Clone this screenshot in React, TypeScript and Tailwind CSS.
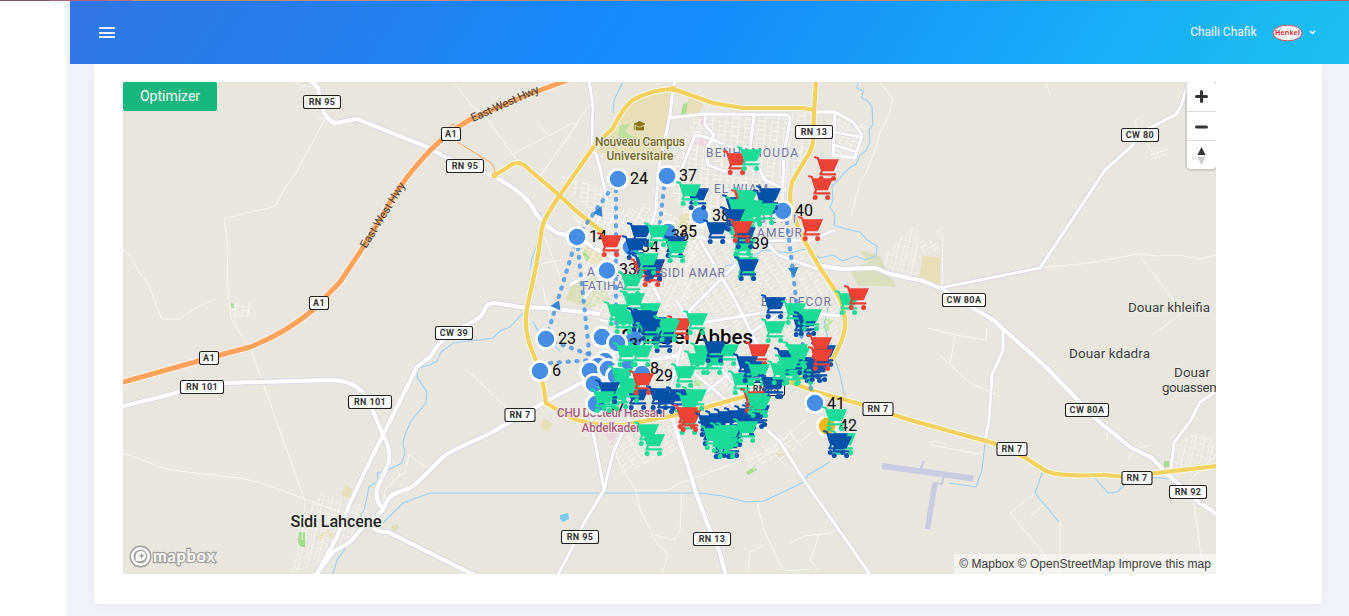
import React from "react";

type Tone = "r" | "g" | "b";

const toneColor: Record<Tone, string> = { r: "#ee4237", g: "#1bdb98", b: "#0351a8" };

const carts: [number, number, Tone][] = [
  [723, 150, "r"], [737, 146, "g"], [684, 185, "b"], [676, 181, "g"],
  [814, 156, "r"], [808, 175, "r"], [798, 216, "r"],
  [722, 194, "b"], [731, 189, "r"], [733, 187, "g"], [753, 189, "b"], [756, 185, "b"],
  [722, 207, "b"], [725, 210, "g"], [725, 196, "g"], [733, 204, "g"], [738, 197, "g"], [740, 202, "g"], [752, 200, "g"],
  [720, 206, "b"], [703, 219, "b"], [729, 231, "g"], [731, 236, "g"], [731, 224, "b"], [728, 218, "r"], [733, 254, "g"], [734, 256, "b"],
  [597, 232, "r"], [661, 233, "b"], [627, 222, "b"], [644, 222, "g"], [622, 235, "b"], [663, 238, "g"],
  [630, 258, "r"], [640, 257, "r"], [638, 262, "r"], [632, 254, "b"], [640, 256, "b"], [634, 250, "g"],
  [618, 271, "g"], [620, 290, "g"], [604, 301, "g"], [636, 300, "g"], [610, 309, "g"], [622, 309, "g"],
  [633, 308, "b"], [627, 307, "b"], [642, 314, "b"], [667, 315, "r"], [683, 310, "g"], [653, 315, "g"], [648, 320, "b"], [650, 328, "b"],
  [637, 324, "g"], [655, 317, "g"], [636, 316, "b"], [613, 342, "g"], [628, 342, "g"],
  [608, 365, "g"], [614, 375, "g"], [606, 384, "g"], [597, 386, "g"], [595, 379, "b"], [590, 388, "g"],
  [624, 385, "b"], [617, 378, "g"], [629, 370, "r"], [666, 386, "b"], [646, 385, "b"], [652, 389, "b"], [671, 363, "g"],
  [684, 350, "g"], [690, 342, "g"], [714, 341, "g"], [700, 350, "g"], [701, 338, "b"], [682, 386, "g"], [676, 392, "g"],
  [634, 421, "g"], [640, 431, "g"],
  [761, 294, "b"], [789, 312, "b"], [781, 300, "g"], [794, 311, "b"], [797, 306, "g"], [761, 318, "g"],
  [745, 341, "r"], [733, 353, "b"], [728, 370, "g"], [743, 361, "g"], [738, 358, "b"], [745, 361, "g"], [761, 374, "b"], [758, 374, "b"],
  [774, 347, "b"], [800, 358, "b"], [791, 360, "g"], [798, 354, "b"], [767, 360, "g"], [777, 361, "g"], [783, 341, "g"], [780, 350, "b"], [775, 354, "g"], [785, 344, "g"],
  [811, 342, "b"], [805, 357, "b"], [807, 334, "r"], [808, 346, "r"],
  [835, 290, "g"], [844, 285, "r"], [822, 406, "g"], [831, 430, "g"], [823, 430, "b"], [827, 433, "b"],
  [675, 410, "g"], [676, 407, "r"], [673, 404, "r"],
  [745, 402, "b"], [742, 404, "b"], [734, 405, "b"], [724, 407, "b"], [714, 408, "b"], [705, 410, "b"], [695, 412, "b"], [732, 412, "b"],
  [740, 388, "r"], [746, 393, "g"], [743, 390, "g"],
  [698, 421, "b"], [720, 422, "b"], [712, 434, "b"], [709, 434, "b"], [717, 433, "b"], [700, 425, "g"], [716, 422, "g"], [710, 422, "g"], [707, 428, "g"], [713, 434, "g"], [733, 418, "g"],
];

const stops: [number, number][] = [
  [618, 179], [667, 176], [700, 215.5], [783, 211], [668, 232], [631, 247], [577, 237], [607, 270.5],
  [546, 339], [540, 371], [634, 339], [602, 337], [617, 343], [605, 361], [598, 366], [590, 371], [628, 368], [608, 369],
  [594, 384], [616, 376], [642, 374], [596, 404], [815, 403],
];

const stopLabels: [number, number, string][] = [
  [630, 184, "24"], [679, 181, "37"], [712, 220.5, "38"], [795, 216, "40"], [679, 237, "35"], [671, 241, "36"],
  [641, 252, "34"], [619, 275, "33"], [589, 242, "14"], [558, 344, "23"], [552, 376, "6"], [655, 380.5, "29"],
  [751, 249, "39"], [827, 408.5, "41"], [839, 431, "42"], [650, 374, "8"], [608, 410, "17"], [629, 350, "32"],
];

const shields: [number, number, number, string][] = [
  [322, 102, 38, "RN 95"], [451, 134, 20, "A1"], [465, 166, 38, "RN 95"], [319, 303, 20, "A1"], [209, 358, 20, "A1"],
  [202, 387, 44, "RN 101"], [370, 402, 44, "RN 101"], [454, 333, 38, "CW 39"], [520, 415, 31, "RN 7"],
  [814, 132, 38, "RN 13"], [1140, 135, 38, "CW 80"], [964, 300, 44, "CW 80A"], [878, 409, 31, "RN 7"],
  [1012, 449, 31, "RN 7"], [1137, 478, 31, "RN 7"], [1188, 492, 38, "RN 92"], [1087, 410, 44, "CW 80A"],
  [580, 537, 38, "RN 95"], [712, 539, 38, "RN 13"], [766, 389, 38, "RN 13"],
];

const fineRoads = [
  "M325 118 L319 118 L325 119 L295 175 L286 186 L276 205 L270 208 L250 212 L224 219 L228 248 L227 274 L229 302 L231 318 L241 335 L250 347 L305 501 L302 540",
  "M295 82 L299 85 L316 87", "M120 245 L133 260 L141 275 L148 283 L158 310 L162 319 L180 319 L192 310 L215 299",
  "M120 452 L170 470 L240 478 L262 483 L340 512", "M453 82 L475 109 L480 110 L517 160", "M513 154 L573 123 L577 125 L541 175",
  "M590 104 L541 175", "M536 122 L548 135", "M543 234 L561 278", "M541 264 L561 260", "M543 287 L551 323",
  "M467 370 L506 407", "M390 455 L400 475 L385 490 L383 505", "M400 475 L405 473 L409 455 L427 468",
  "M880 82 L893 99 L888 117 L880 133 L873 156 L865 175 L860 182 L851 216",
  "M1040 268 L1090 263 L1138 254 L1157 256 L1178 255 L1200 259 L1216 255", "M1138 254 L1174 301", "M1184 311 L1153 335",
  "M1139 117 L1134 123 L1158 161", "M1150 155 L1168 149 M1151 159 L1167 154 M1156 151 L1160 158",
  "M928 328 L955 335 L986 340 L987 328 M955 335 L950 365", "M940 355 L970 383 L1001 397",
  "M942 228 L937 232 L943 238 L942 286", "M615 452 L622 470 L636 490 L640 510 L650 530 L654 540 L668 555 L662 574",
  "M635 490 L668 490 L680 483 L735 463 L780 449", "M682 493 L680 530 L674 540 L654 535", "M757 503 L764 530 L780 564 L786 571 L810 569",
  "M763 546 L750 552 L748 574", "M790 543 L805 536 L830 533 L837 530 M820 533 L810 560 L820 572",
  "M1216 455 L1190 480 L1198 530 L1202 568", "M1035 493 L1010 513 L1060 573", "M1060 522 L1060 573", "M1031 516 L1046 502",
  "M985 450 L979 454 L930 445 L933 441 L947 444", "M1046 82 L1050 95", "M760 460 L805 420 M775 464 L812 432 M771 450 L785 465 M790 433 L803 447",
  "M1107 440 L1107 420 M1128 460 L1134 449 L1151 445",
];

const whiteRoads = [
  "M310 80 L318 88 L321 103 Q325 121 336 123 L357 119 L427 147 L447 158 L493 176 Q522 191 531 205 Q540 223 557 233 L577 237 L603 253 L660 280",
  "M120 407 L180 392 L223 383 L330 380 Q356 380 368 399 L383 435 Q391 449 389 462 L378 486 Q373 501 385 510",
  "M600 314 L547 308 L520 307 L495 303 Q487 302 484 311 Q482 318 470 323 L440 342 L430 357 L417 367 L383 435 L367 467 L350 503 L337 537 L317 574",
  "M680 355 L640 362 L610 367 L583 382 L543 403 L517 418 L487 435 Q448 452 443 457 L423 477 Q414 487 405 490 Q389 494 386 503 L383 510 L363 527 L350 542 L333 552 L315 576",
  "M373 528 Q382 533 388 532 L420 548 L474 575",
  "M638 400 L628 420 L613 453 L604 490 L584 523 L566 560 L557 576", "M590 400 L592 427 L597 453 L604 490",
  "M664 390 L676 430 L687 463 L696 493 L707 523 L720 553 L726 576",
  "M735 395 L756 420 L780 442 L804 480 L839 530 L871 576",
  "M589 80 L593 108 L592 142 L600 168 L607 200", "M675 80 L673 89 L670 115 L658 172 L656 210 L640 260 L660 300",
  "M668 118 L705 114 L787 115 Q790 116 790 120 L784 155 L782 210",
  "M818 265 L840 269 L875 268 L890 274 L923 281 L940 288 L993 320 L1045 366 L1097 420 L1130 447 L1152 458 L1165 472 L1200 503 L1217 514",
  "M940 288 L1040 268 L1105 170 L1133 145 L1136 135 L1175 115 Q1183 107 1188 80",
  "M1171 469 L1174 443 L1191 420 L1200 402 L1217 391", "M1003 328 L1003 350 L992 375 L989 420 L985 441",
  "M815 112 L835 112 L853 122 L862 135 L855 158 L833 155 L835 112 M835 132 L860 137 M834 145 L857 152",
  "M695 135 L706 137 L738 150 M695 135 L677 181 M705 114 L705 125 L714 135 L706 150 L708 165 L735 175",
  "M754 115 L750 150 L765 180 L786 190", "M645 235 L680 235 L735 242 L760 241 L810 240 L835 230", "M820 270 L778 255 L753 228",
  "M600 320 L650 330 L700 323 L780 310 L840 316", "M676 300 L715 360 L760 420", "M700 240 L735 300 L760 350", "M770 200 L740 260 L690 310 L670 390",
  "M583 300 L605 272 M570 285 L610 260", "M711 365 L740 340 L800 300", "M695 400 L760 350 M690 370 L745 415",
];

const yellowRoads = [
  "M493 176 L507 168 Q515 160 524 165 L559 195 L575 210 L605 234",
  "M816 80 L814 112 L813 142 Q811 152 805 160 L792 182 Q788 199 793 215 L803 238 L820 268 L837 293 Q846 310 845 327 Q843 342 832 360 Q815 375 790 382",
  "M815 110 L803 108 L743 108 L713 103 L673 89 Q650 90 633 100 Q623 107 613 128 L593 148 L560 195 Q544 218 542 228 L537 262 L527 308 Q523 330 533 353 Q543 375 546 403 L570 417 Q593 427 623 425 L677 415 L707 407 L743 397 L790 382 L817 392 L860 404 L910 420 L993 443 L1024 457 L1046 471 Q1060 477 1103 475 L1130 477 L1156 473 L1217 466",
];

const orangeRoad =
  "M568 80 L527 95 L473 118 Q443 134 417 165 Q397 188 383 215 L360 252 L340 282 L313 310 Q284 334 250 347 L220 355 L120 383";

const rivers = [
  "M858 82 L857 88 L863 91 L862 98 L868 101 L872 107 L873 124 L869 130 L870 142 L866 151 L860 155 L856 164 L848 169 L840 178 L832 186 L833 200 L830 208 L835 214 L834 225 L846 229 L860 232 L867 240 L877 246 L876 256 L865 260 L856 256 L843 261 L833 255 L820 258 L805 249 L790 253 L763 250 L745 262 L725 266",
  "M623 82 L614 100 L613 113", "M541 212 L541 235 L532 258 L530 270",
  "M523 313 L510 327 L500 331 L493 338 L478 340 L460 342 L453 343 L441 352 L437 361 L430 365 L418 368 L417 377 L427 392 L426 403 L416 415 L410 423 L405 435 L403 443 L405 452 L402 463 L386 471 L377 473 L378 481 L369 487 L367 497 L364 510 L360 517 L358 530 L350 540 L343 552 L337 560 L333 574",
  "M383 523 L403 503 L430 493 L700 493 L722 496 L747 502 L764 501 L804 482 L808 475 L830 462",
  "M985 443 L982 470 L976 487 L949 483", "M1130 480 L1117 492 L1108 493 L1095 478 L1068 477 L1042 473 L1035 493 L1059 522",
  "M1150 477 L1168 479", "M533 321 L540 335 L552 343 L560 351", "M830 300 L824 325 L840 375 L845 398",
];

const dotted = [
  "M546 339 L577 237", "M577 237 L618 179", "M616 190 L616 330", "M578 248 L590 360", "M664 187 L659 232",
  "M787 222 L795 290 L802 340 L812 394", "M550 363 L592 360", "M546 339 L588 354",
];

const streetBlocks: [string, string][] = [
  ["sA", "692,118 812,112 806,160 790,190 775,235 690,232 668,180"],
  ["sB", "575,215 660,205 700,235 690,300 620,330 585,300"],
  ["sC", "690,235 800,240 838,300 838,350 780,380 700,400 600,380 610,330 680,300"],
  ["sB", "832,115 866,125 860,160 832,158"],
  ["sC", "608,440 672,425 680,450 620,475"],
  ["sD", "320,493 364,505 372,520 330,560 290,574 300,520"],
  ["sA", "232,303 254,303 256,316 232,318"],
  ["sD", "885,255 903,235 920,222 917,275 885,268"],
  ["sC", "920,240 942,242 942,252 922,254"],
  ["sD", "1170,450 1195,432 1213,440 1214,462 1176,467"],
  ["sC", "745,452 790,430 800,440 750,475"],
  ["sA", "560,175 610,190 620,225 600,225"],
];

const parks: [string, string][] = [
  ["#e6dfb9", "623,112 640,95 673,90 668,118 660,153 595,153 613,132"],
  ["#d9dfbe", "868,262 860,250 880,256 885,268 896,286 858,286 850,270"],
  ["#e6dfb8", "923,256 940,257 940,286 919,280"],
  ["#dbe1bd", "570,285 600,275 610,300 590,308 566,300"],
  ["#e6dfb9", "582,245 610,252 606,268 588,262"],
  ["#ead6dc", "698,134 712,140 708,148 694,145"], ["#ead6dc", "701,115 709,120 707,127 699,124"],
  ["#ead6dc", "603,430 618,430 612,447"],
  ["#a9dd8f", "683,104 691,102 686,116 681,115"], ["#a9dd8f", "582,252 585,250 590,259 586,261"],
  ["#a9dd8f", "746,472 755,466 757,470 748,475"], ["#a9dd8f", "1164,461 1169,461 1169,467 1164,467"],
  ["#a9dd8f", "231,303 234,304 234,308 231,307"],
  ["#bfe0a0", "620,125 630,124 625,132 640,140 630,146 618,135"],
  ["#e6dfb9", "346,486 353,489 350,499 341,494"], ["#e6dfb9", "318,536 325,531 326,536 320,541"], ["#e6dfb9", "327,530 337,533 337,541 329,538"],
  ["#e6dfb9", "544,418 553,424 548,432 540,427"], ["#e6dfb9", "776,452 782,449 784,455 778,457"],
  ["#dbe1bd", "391,526 398,524 399,528 393,532"], ["#e6dfb9", "690,90 703,105 697,118 685,118"],
  ["#dbe1bd", "870,280 892,280 896,287 862,285"], ["#e6dfb9", "680,215 690,212 690,235 676,232"],
  ["#c3e3a6", "694,380 705,380 703,386 694,386"], ["#c3e3a6", "825,318 833,320 828,332 823,330"],
];

function Cart({ x, y, tone }: { x: number; y: number; tone: Tone }) {
  const c = toneColor[tone];
  return (
    <g transform={`translate(${x} ${y})`} fill={c}>
      <path d="M1 1.200 L4 2 L8 15 L6.300 18.400 H21.300" fill="none" stroke={c} strokeWidth="2.100" strokeLinecap="round" strokeLinejoin="round" />
      <path d="M4 3.200 H25 L19.800 15.300 H7.500 Z" />
      <circle cx="7.2" cy="22.4" r="2.500" />
      <circle cx="19.6" cy="22.4" r="2.500" />
    </g>
  );
}

function Shield({ x, y, w, text }: { x: number; y: number; w: number; text: string }) {
  return (
    <g>
      <rect x={x - w / 2 + 0.5} y={y - 6.5} width={w - 1} height="13" rx="2" fill="#fff" stroke="#222" strokeWidth="1.1" />
      <text x={x} y={y + 3.3} textAnchor="middle" fontSize="9" fontWeight="700" letterSpacing="0.4" fill="#333">{text}</text>
    </g>
  );
}

function MapCanvas() {
  const label = "fill-[#404040] stroke-[#eeece8] [stroke-width:2px] [paint-order:stroke]";
  return (
    <svg className="block h-[492px] w-[1093px]" viewBox="123 82 1093 492" fontFamily="Roboto, 'Noto Sans', sans-serif">
      <defs>
        <pattern id="sA" width="13" height="9" patternUnits="userSpaceOnUse" patternTransform="rotate(6)"><path d="M0 0H13M0 4.5H7M0 0V9M7 0V9" fill="none" stroke="#fff" strokeWidth="1" /></pattern>
        <pattern id="sB" width="11" height="8" patternUnits="userSpaceOnUse" patternTransform="rotate(28)"><path d="M0 0H11M0 0V8M5 4H11M5 0V8" fill="none" stroke="#fff" strokeWidth="1" /></pattern>
        <pattern id="sC" width="10" height="9" patternUnits="userSpaceOnUse" patternTransform="rotate(-32)"><path d="M0 0H10M0 0V9M0 5H6" fill="none" stroke="#fff" strokeWidth="1" /></pattern>
        <pattern id="sD" width="9" height="6" patternUnits="userSpaceOnUse" patternTransform="rotate(13)"><path d="M0 0H9M0 0V6M4 0V6" fill="none" stroke="#fff" strokeWidth=".8" /></pattern>
      </defs>
      <rect x="123" y="82" width="1093" height="492" fill="#e9e6e0" />
      {parks.map(([f, p], i) => <polygon key={i} points={p} fill={f} />)}
      {streetBlocks.map(([id, p], i) => <polygon key={i} points={p} fill={`url(#${id})`} opacity=".7" />)}
      <polygon points="299,532 305,532 305,547 301,547 298,543" fill="#a3dd8d" />
      <g fill="none" stroke="#c9cbde">
        <path d="M882 466 L973.5 478.5" strokeWidth="6" />
        <path d="M935 483 L927.5 529" strokeWidth="5.5" />
        <path d="M920 470 L924 461 M944 475 L942 484 L934 483" strokeWidth="2" />
      </g>
      <g fill="none" stroke="#f6f5f2" strokeWidth="1">{fineRoads.map((d) => <path key={d} d={d} />)}</g>
      <g fill="none" stroke="#9fd0f2" strokeWidth="1.1">{rivers.map((d) => <path key={d} d={d} />)}</g>
      <path d="M560 515 L568 513 L569 519 L563 522 L560 519 Z" fill="#79cbf0" />
      <g fill="none" strokeLinejoin="round">
        {whiteRoads.map((d, i) => <path key={d} d={d} stroke="#d7d7e6" strokeWidth={i < 5 || i === 12 || i === 7 ? 5.6 : 4.2} />)}
        {whiteRoads.map((d, i) => <path key={d + "w"} d={d} stroke="#fff" strokeWidth={i < 5 || i === 12 || i === 7 ? 4 : 2.8} />)}
        {yellowRoads.map((d) => <path key={d} d={d} stroke="#faf6e6" strokeWidth="6" />)}
        {yellowRoads.map((d) => <path key={d + "y"} d={d} stroke="#f2d262" strokeWidth="4.200" />)}
        <path d="M447 137 Q450 118 458 128 M457 142 L490 162 Q495 166 495 174" stroke="#ffa45f" strokeWidth="1" />
        <path d={orangeRoad} stroke="#fff3e6" strokeWidth="7" />
        <path d={orangeRoad} stroke="#ffa45f" strokeWidth="5" />
      </g>
      <circle cx="494.5" cy="175.5" r="3" fill="#f2d262" />
      <circle cx="673" cy="89" r="3" fill="#f2d262" />

      <g className="fill-[#404040]" fontSize="11.500">
        <text transform="translate(473 122) rotate(-24)" textLength="73">East-West Hwy</text>
        <text transform="translate(366 249) rotate(-58)" textLength="75">East-West Hwy</text>
      </g>
      <g className="fill-[#7077a3] stroke-[#eeece8] [stroke-width:2px] [paint-order:stroke]" fontSize="12">
        <text x="706" y="157" textLength="92">BENHAMOUDA</text>
        <text x="714" y="193" textLength="54">EL WIAM</text>
        <text x="758" y="223" textLength="38">BENI</text>
        <text x="757" y="237" textLength="45">AMEUR</text>
        <text x="660" y="277" textLength="65">SIDI AMAR</text>
        <text x="587" y="276" textLength="32">ADIL</text>
        <text x="582" y="290" textLength="42">FATIHA</text>
        <text x="761" y="306" textLength="70">BEL DECOR</text>
      </g>
      <g fontSize="12" fontWeight="500" textAnchor="middle" className="fill-[#75682b] stroke-[#f0ecd8] [stroke-width:2px] [paint-order:stroke]">
        <text x="640" y="146" textLength="90">Nouveau Campus</text>
        <text x="640" y="160" textLength="67">Universitaire</text>
      </g>
      <path d="M634 124 L639.500 121.500 L645 124 L639.500 126.500 Z M636 126.500 L639.500 128 L643.500 126.500 V130 H636 Z M634.300 125 V130" fill="#8a7414" stroke="#8a7414" strokeWidth=".8" />
      <g fontSize="12" fontWeight="500" textAnchor="middle" className="fill-[#a85c7c] stroke-[#f3ebe9] [stroke-width:2px] [paint-order:stroke]">
        <text x="611" y="417" textLength="108">CHU Docteur Hassani</text>
        <text x="611" y="432" textLength="59">Abdelkader</text>
      </g>
      <g className={label} fontSize="13.5">
        <text x="1128" y="312" textLength="82">Douar khleifia</text>
        <text x="1069" y="358" textLength="81">Douar kdadra</text>
        <text x="1174" y="377" textLength="36">Douar</text>
        <text x="1162" y="392" textLength="59">gouassem</text>
      </g>
      <text x="290.500" y="527" fontSize="16.500" fontWeight="500" textLength="91" className="fill-[#222] stroke-[#f3f1ed] [stroke-width:3px] [paint-order:stroke]">Sidi Lahcene</text>
      <text x="753" y="344" fontSize="20.500" fontWeight="500" textAnchor="end" textLength="132" className="fill-black stroke-[#f3f1ed] [stroke-width:3px] [paint-order:stroke]">Sidi Bel Abbes</text>
      {shields.map(([x, y, w, t], i) => <Shield key={i} x={x} y={y} w={w} text={t} />)}

      <g fill="none" stroke="#468fe4" strokeWidth="4.2" strokeOpacity=".78" strokeLinecap="round" strokeDasharray="1.200 7.600">
        {dotted.map((d) => <path key={d} d={d} />)}
      </g>
      <g fill="#3385cf">
        <path d="M559 300.500 L560.500 310.500 L550.500 306 Z" /><path d="M601.500 206 L602.500 217 L592.500 213 Z" /><path d="M788 268 L798.500 267 L794 277 Z" />
      </g>
      {stops.map(([x, y]) => <circle key={`${x}-${y}`} cx={x} cy={y} r="9.600" fill="#458de5" stroke="#fff" strokeWidth="2.700" />)}
      <circle cx="827" cy="426" r="9.600" fill="#fdb90b" stroke="#fff" strokeWidth="2.700" />
      <g fontSize="16" fill="#000">{stopLabels.map(([x, y, t]) => <text key={t} x={x} y={y}>{t}</text>)}</g>
      {carts.map(([x, y, t], i) => <Cart key={i} x={x} y={y} tone={t} />)}

      <g>
        <circle cx="140.500" cy="556.500" r="9.800" fill="#a5a39f" fillOpacity=".5" stroke="#a09e9a" strokeWidth="2.200" />
        <circle cx="140.500" cy="556.500" r="8.200" fill="#a5a39f" stroke="#fff" strokeWidth="2.600" />
        <path d="M136 561 C134.500 554 137 551 141 551 C147 551.500 147.500 558.500 143 560.500 C140.500 561.400 137.500 561.200 136 561 Z" fill="#fff" />
        <path d="M141.600 552.600 L142.500 554.900 L144.800 555.800 L142.500 556.700 L141.600 559 L140.700 556.700 L138.400 555.800 L140.700 554.900 Z" fill="#a09e9a" />
        <text x="153" y="561.500" fontFamily="Lato, sans-serif" fontSize="16.500" fontWeight="700" textLength="62" className="fill-white stroke-[#a3a19d] [stroke-width:2.500px] [paint-order:stroke]">mapbox</text>
      </g>
    </svg>
  );
}

function MapControls() {
  return (
    <div className="absolute top-0 right-0 flex w-[29px] flex-col rounded bg-white shadow-[0_0_0_2px_rgba(0,0,0,0.1)]">
      <button className="flex h-[29px] items-center justify-center" aria-label="Zoom in">
        <svg width="13" height="13" viewBox="0 0 13 13"><path d="M6.500 1.500V11.500M1.500 6.500H11.500" stroke="#333" strokeWidth="3" strokeLinecap="round" /></svg>
      </button>
      <button className="flex h-[29px] items-center justify-center border-t border-[#ddd]" aria-label="Zoom out">
        <svg width="13" height="13" viewBox="0 0 13 13"><path d="M1.500 7H11.500" stroke="#333" strokeWidth="3" strokeLinecap="round" /></svg>
      </button>
      <button className="flex h-[29px] items-center justify-center border-t border-[#ddd] pt-px" aria-label="Reset bearing">
        <svg width="9" height="19" viewBox="0 0 9 19"><path d="M4.500 1L8.500 9H.5Z" fill="#333" /><path d="M4.500 19L8.500 11H.5Z" fill="#ccc" /></svg>
      </button>
    </div>
  );
}

export default function App() {
  return (
    <div className="flex h-[616px] w-[1349px] flex-col overflow-hidden bg-white font-[Roboto,sans-serif]">
      <div className="h-px shrink-0 bg-[linear-gradient(90deg,#7d5a62_0_50px,#b0648c_50px_106px,#ba7280_106px_133px,#bb8b77_133px_1200px,#c05878_1349px)]" />
      <div className="flex min-h-0 flex-1">
        <aside className="w-[67px] shrink-0 bg-white" />
        <div className="flex min-w-0 flex-1 flex-col bg-[#f2f3f8]">
          <header className="z-10 ml-[3px] flex h-[63px] shrink-0 items-center justify-between bg-[linear-gradient(125deg,#3275e6_0%,#138cfe_47%,#1cc0f3_100%)] pr-[33px] pl-[29px] text-white">
            <button className="flex w-4 flex-col gap-[2.500px]" aria-label="Menu">
              <span className="h-[2px] bg-white/90" /><span className="h-[2px] bg-white/90" /><span className="h-[2px] bg-white/90" />
            </button>
            <div className="flex items-center">
              <span className="pb-[2px] text-[12px] leading-none whitespace-nowrap">Chaili Chafik</span>
              <svg className="ml-[15.500px] h-[18px] w-[31px]" viewBox="0 0 31 18">
                <ellipse cx="15.500" cy="9" rx="14.500" ry="7.800" fill="#fff" stroke="#c8545c" strokeWidth="1" />
                <text x="15.500" y="11.300" textAnchor="middle" fontFamily="Liberation Sans, sans-serif" fontSize="7.200" fontWeight="700" textLength="25" fill="#dd2730">Henkel</text>
              </svg>
              <svg className="ml-[6px] h-[7px] w-[7px]" viewBox="0 0 7 7"><path d="M1 2L3.500 4.600L6 2" fill="none" stroke="#fff" strokeWidth="1.300" /></svg>
            </div>
          </header>
          <main className="flex-1 pr-[27px] pl-[27px]">
            <section className="h-[540px] rounded-b-[4px] bg-white pt-[18px] pl-[29px] shadow-[0_0_13px_0_rgba(82,63,105,0.07)]">
              <div className="relative h-[492px] w-[1093px] overflow-hidden">
                <MapCanvas />
                <button className="absolute top-0 left-0 flex h-[29px] w-[94px] items-center justify-center rounded-[2px] bg-[#16b67f] text-[14px] text-white">Optimizer</button>
                <MapControls />
                <div className="absolute right-0 bottom-0 flex h-5 items-center bg-white/50 px-[5px] font-['Liberation_Sans',sans-serif] text-[12px] tracking-[0.030px] whitespace-nowrap text-[#404040]">
                  © Mapbox © OpenStreetMap Improve this map
                </div>
              </div>
            </section>
          </main>
        </div>
      </div>
    </div>
  );
}
